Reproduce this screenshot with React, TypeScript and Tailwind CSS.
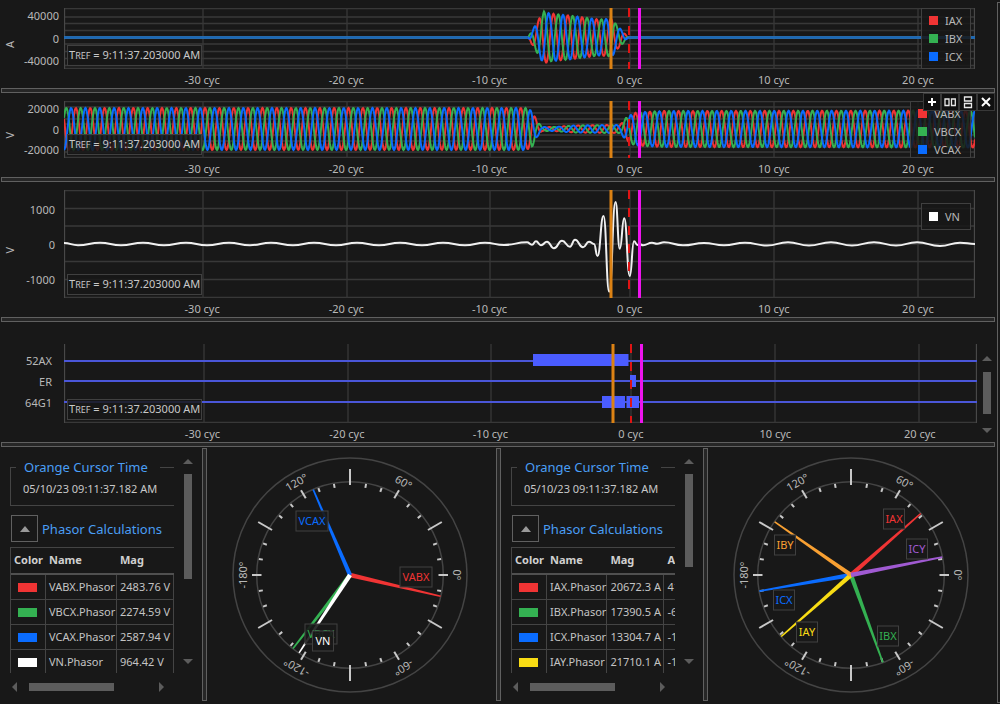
import type { ReactNode } from "react";
import clsx from "clsx";

const RED = "#f03434";
const GREEN = "#34b152";
const BLUE = "#0a6cff";
const BG = "#181818";

type Point = [number, number];

interface Series {
  label: string;
  color: string;
  swatch: string;
}

interface Phasor {
  name: string;
  color: string;
  angle: number;
  box: Point;
}

interface PhasorRow {
  name: string;
  swatch: string;
  mag: string;
  ang?: string;
}

const CYCLE = 14.35;
const TICKS = [139, 283, 426, 566, 710, 854];
const TICK_LABELS = ["-30 cyc", "-20 cyc", "-10 cyc", "0 cyc", "10 cyc", "20 cyc"];

/* ── waveform helpers ── */

/** Linear interpolation over an envelope given as [x, amplitude] */
function envelope(points: Point[], x: number) {
  for (let i = 1; i < points.length; i++) {
    const [x0, a0] = points[i - 1];
    const [x1, a1] = points[i];
    if (x <= x1) return a0 + ((a1 - a0) * (x - x0)) / (x1 - x0);
  }
  return points[points.length - 1][1];
}

function sinePath(env: Point[], peak: number, zero: number, width: number) {
  const out: string[] = [];
  for (let x = 0; x <= width; x += 0.5) {
    const y = zero - envelope(env, x) * Math.cos((2 * Math.PI * (x - peak)) / CYCLE);
    out.push(`${x} ${y.toFixed(2)}`);
  }
  return "M" + out.join("L");
}

/** Curve through turning points, flat at each one */
function turningPath(points: Point[]) {
  let d = `M${points[0][0]} ${points[0][1]}`;
  for (let i = 1; i < points.length; i++) {
    const [x0, y0] = points[i - 1];
    const [x1, y1] = points[i];
    const mx = ((x0 + x1) / 2).toFixed(2);
    d += `C${mx} ${y0} ${mx} ${y1} ${x1} ${y1}`;
  }
  return d;
}

const currentEnv: Point[] = [[0, 0], [464, 0], [470, 10], [477, 22], [480, 26], [486, 24], [505, 22], [535, 18], [548, 19], [553, 12], [558, 7], [564, 0], [911, 0]];
const voltageEnv: Point[] = [[0, 21], [462, 21], [468, 18], [473, 8], [478, 2], [490, 2], [510, 3.5], [545, 4], [556, 4], [562, 11], [570, 16], [580, 17], [600, 18], [911, 18.5]];

const neutral: Point[] = [
  [0, 53], [14, 55.2], [36, 52.7], [57, 55.2], [79, 52.7], [100, 55.2], [122, 52.7], [143, 55.2], [165, 52.7],
  [186, 55.2], [207, 52.7], [229, 55.2], [250, 52.7], [272, 55.2], [293, 52.7], [315, 55.2], [336, 52.7],
  [358, 55.2], [379, 52.7], [401, 55.2], [421, 52.7], [440, 55], [463, 52.3], [468, 54.7], [472, 51.3], [477, 55.3],
  [483, 51.7], [490, 58.3], [498, 50.7], [506, 56.7], [511, 49.7], [519, 57.3], [525, 51.7], [530, 54],
  [533.5, 66], [539.5, 26], [545.2, 101.7], [551.5, 12], [555.8, 58.7], [560.2, 28.3], [565.8, 86],
  [570, 51.3], [573.5, 55], [575.5, 54], [579, 55.3], [588, 52.7], [593, 53.7], [600, 52.3], [619, 55.3],
  [640, 53], [660, 55.3], [681, 52.7], [703, 55.5], [724, 52.3], [745, 55.5], [767, 52.3], [788, 55.5],
  [810, 52.3], [832, 55.5], [853, 52.3], [876, 56], [896, 52.7], [911, 54],
];

const currents: Series[] = [
  { label: "IAX", color: RED, swatch: "bg-[#f03434]" },
  { label: "IBX", color: GREEN, swatch: "bg-[#34b152]" },
  { label: "ICX", color: BLUE, swatch: "bg-[#0a6cff]" },
];
const voltages: Series[] = [
  { label: "VABX", color: RED, swatch: "bg-[#f03434]" },
  { label: "VBCX", color: GREEN, swatch: "bg-[#34b152]" },
  { label: "VCAX", color: BLUE, swatch: "bg-[#0a6cff]" },
];
const neutrals: Series[] = [{ label: "VN", color: "#ffffff", swatch: "bg-white" }];

/* ── shared bits ── */

function Splitter({ vertical = false }: { vertical?: boolean }) {
  return (
    <div
      role="separator"
      className={clsx("shrink-0 border border-[#606060] bg-[#262626]", vertical ? "w-[5px]" : "mx-px mr-0.5 h-[5px]")}
    />
  );
}

function ReferenceTime() {
  return (
    <div className="absolute bottom-[3px] left-[3px] border border-[#404040] bg-[#181818]/85 px-px leading-[18px] text-[#c8c8c8]">
      T<span className="text-[9px]">REF</span> = 9:11:37.203000 AM
    </div>
  );
}

function Legend({ series, className }: { series: Series[]; className: string }) {
  return (
    <ul className={clsx("absolute right-1 flex flex-col justify-center border border-[#404040] bg-[#181818]/85 pl-[7px]", className)}>
      {series.map((s) => (
        <li key={s.label} className="flex items-center gap-[7px] leading-[18px]">
          <span className={clsx("size-[9px]", s.swatch)} />
          {s.label}
        </li>
      ))}
    </ul>
  );
}

function Cursors({ height, shift = 0 }: { height: number; shift?: number }) {
  return (
    <g>
      <path d={`M${565 + shift} 0V${height}`} stroke="#e01414" strokeWidth="2" strokeDasharray="9 9" />
      <path d={`M${547 + shift} 0V${height}`} stroke="#dc8214" strokeWidth="3" />
      <path d={`M${575.5 + shift} 0V${height}`} stroke="#ee14ee" strokeWidth="3" />
    </g>
  );
}

function GridLines({ rows, height, width, shift = 0 }: { rows: number[]; height: number; width: number; shift?: number }) {
  return (
    <g stroke="#383838" strokeWidth="1.3">
      {rows.map((y) => <path key={y} d={`M0 ${y}H${width}`} />)}
      {TICKS.map((x) => <path key={x} d={`M${x + shift} 0V${height}`} />)}
      <path d={`M.5 0V${height}M${width - 0.5} 0V${height}`} stroke="#484848" />
    </g>
  );
}

interface ChartProps {
  unit?: string;
  yLabels: string[];
  yClass: string;
  columns?: string;
  side?: ReactNode;
  children: ReactNode;
}

function Chart({ unit, yLabels, yClass, columns = "grid-cols-[20px_44px_1fr_22px]", side, children }: ChartProps) {
  return (
    <div className={clsx("grid", columns)}>
      <div className="flex items-center justify-center pt-3">
        <span className="rotate-180 leading-3 [writing-mode:vertical-rl]">{unit}</span>
      </div>
      <div className={clsx("flex flex-col justify-between text-right leading-4", yClass)}>
        {yLabels.map((l) => <span key={l}>{l}</span>)}
      </div>
      <div className="relative">{children}</div>
      <div className="row-span-2">{side}</div>
      <div className="col-start-3 -mr-3 grid h-[19px] grid-cols-[66fr_144fr_144fr_142fr_138fr_150fr_138fr] text-center leading-[22px]">
        <span />
        {TICK_LABELS.map((l) => <span key={l}>{l}</span>)}
      </div>
    </div>
  );
}

function Triangle({ dir }: { dir: "up" | "down" | "left" | "right" }) {
  const d = { up: "M0 6L5 1L10 6Z", down: "M0 1L5 6L10 1Z", left: "M5 0V10L0 5Z", right: "M1 0V10L6 5Z" }[dir];
  const tall = dir === "left" || dir === "right";
  return (
    <svg width={tall ? 6 : 10} height={tall ? 10 : 7} className="fill-[#5c5c5c]">
      <path d={d} />
    </svg>
  );
}

/* ── toolbar over the hovered chart ── */

function ChartToolbar() {
  const btn = "flex h-[18px] w-[18px] items-center justify-center border border-[#383838] bg-[#101010]";
  return (
    <div className="absolute top-0 right-0.5 z-10 flex">
      <button aria-label="Add" className={btn}>
        <svg width="10" height="10" stroke="#fff" strokeWidth="2"><path d="M1 5H9M5 1V9" /></svg>
      </button>
      <button aria-label="Split vertically" className={btn}>
        <svg width="12" height="10" fill="none" stroke="#e8e8e8" strokeWidth="1.3"><path d="M1 2H5V8.500H1ZM7.500 2H11.300V8.500H7.500Z" /></svg>
      </button>
      <button aria-label="Split horizontally" className={btn}>
        <svg width="10" height="13" fill="none" stroke="#e8e8e8" strokeWidth="1.3"><path d="M1.500 1H8.500V5H1.500ZM1.500 7.500H8.500V11.500H1.500Z" /></svg>
      </button>
      <button aria-label="Close" className={btn}>
        <svg width="10" height="10" stroke="#fff" strokeWidth="2"><path d="M1 1L9 9M9 1L1 9" /></svg>
      </button>
    </div>
  );
}

/* ── digital channels ── */

function DigitalPlot() {
  return (
    <svg viewBox="0 0 913 79" preserveAspectRatio="none" className="block h-[79px] w-full">
      <GridLines rows={[78.5]} height={79} width={913} shift={1} />
      <path d="M0 17H913M0 37H913M0 58H913" stroke="#4a56d8" strokeWidth="2" />
      <path d="M469 10H564.500V22H469ZM566 31H572V43H566ZM538 52H561V64H538ZM562.500 52H575V64H562.500Z" fill="#4a5cff" />
      <Cursors height={79} shift={2} />
    </svg>
  );
}

/* ── phasor dial ── */

function Dial({ phasors }: { phasors: Phasor[] }) {
  const polar = (r: number, deg: number): Point => {
    const a = (deg * Math.PI) / 180;
    return [r * Math.cos(a), -r * Math.sin(a)];
  };
  const marks = Array.from({ length: 36 }, (_, i) => i * 10);
  const scale = [0, 60, 120, -180, -120, -60];

  return (
    <div className="flex min-w-60 flex-1 items-center justify-center pr-[3px]">
      <svg width="240" height="240" viewBox="-120 -120 240 240" fontSize="11" textAnchor="middle">
        <g fill="none" stroke="#444" strokeWidth="1.500">
          <circle r="117" />
          <circle r="93.300" />
        </g>
        {marks.map((deg) => {
          const long = deg % 30 === 0 && deg % 60 !== 0;
          const mid = deg % 60 === 0;
          const [x0, y0] = polar(long ? 90 : 88.5, deg);
          const [x1, y1] = polar(long ? 106 : mid ? 98 : 92.5, deg);
          return <path key={deg} d={`M${x0} ${y0}L${x1} ${y1}`} stroke="#c8c8c8" strokeWidth="2" />;
        })}
        {scale.map((deg) => {
          const [x, y] = polar(107, deg);
          return (
            <text key={deg} transform={`translate(${x} ${y}) rotate(${90 - deg})`} dy="4" fill="#b8b8b8">
              {deg}°
            </text>
          );
        })}
        {phasors.map((p) => (
          <path key={p.name} d="M0 -2.200L93 -.8V.8L0 2.200Z" transform={`rotate(${-p.angle})`} fill={p.color} />
        ))}
        {phasors.map((p) => {
          const w = p.name.length > 3 ? 32 : 21;
          return (
            <g key={p.name} transform={`translate(${p.box[0]} ${p.box[1]})`}>
              <rect x={-w / 2} y="-10" width={w} height="20" fill={BG} fillOpacity=".9" stroke="#404040" />
              <text dy="4" fill={p.color}>{p.name}</text>
            </g>
          );
        })}
      </svg>
    </div>
  );
}

/* ── phasor table panel ── */

interface PhasorPanelProps {
  rows: PhasorRow[];
  nameCol: string;
  magCol: string;
  thumb: string;
}

function PhasorPanel({ rows, nameCol, magCol, thumb }: PhasorPanelProps) {
  const hasAngle = rows.some((r) => r.ang);
  const cell = "border-r border-b border-[#444] pl-[3px]";
  return (
    <section className="grid w-[202px] shrink-0 grid-cols-[174px_28px] grid-rows-[225px_1fr]">
      <div className="overflow-hidden pl-2.5">
        <fieldset className="mt-[9px] h-[49px] w-60 border border-[#444]">
          <legend className="ml-[5px] pr-3 pl-2 text-[13px] leading-5 text-[#4a9ef5]">Orange Cursor Time</legend>
          <p className="pl-3 leading-6 text-[#c8c8c8]">05/10/23 09:11:37.182 AM</p>
        </fieldset>
        <div className="mt-[9px] flex items-center gap-1">
          <button aria-label="Collapse" className="ml-px flex size-[27px] shrink-0 items-center justify-center border border-[#606060]">
            <svg width="10" height="6" className="fill-[#999]"><path d="M0 6L5 0L10 6Z" /></svg>
          </button>
          <h2 className="text-[13px] leading-5 whitespace-nowrap text-[#4a9ef5]">Phasor Calculations</h2>
        </div>
        <div className="mt-[5px] w-60 border-t border-l border-[#444]">
          <table className="table-fixed border-separate border-spacing-0 whitespace-nowrap">
            <colgroup>
              <col className="w-[35px]" />
              <col className={nameCol} />
              <col className={magCol} />
              {hasAngle && <col className="w-[60px]" />}
            </colgroup>
            <thead>
              <tr className="h-[27px] text-left text-[#d0d0d0] [&>th]:border-b-2 [&>th]:border-[#505050] [&>th]:pl-[3px]">
                <th>Color</th>
                <th>Name</th>
                <th>Mag</th>
                {hasAngle && <th>Angle</th>}
              </tr>
            </thead>
            <tbody>
              {rows.map((r) => (
                <tr key={r.name} className="h-[25px] text-[#c4c4c4]">
                  <td className={cell}><div className={clsx("ml-1 h-[9px] w-[19px]", r.swatch)} /></td>
                  <td className={cell}>{r.name}</td>
                  <td className={cell}>{r.mag}</td>
                  {r.ang && <td className={cell}>{r.ang}</td>}
                </tr>
              ))}
            </tbody>
          </table>
        </div>
      </div>
      <div className="flex flex-col items-center pt-2.5 pb-2">
        <button aria-label="Scroll up"><Triangle dir="up" /></button>
        <div className={clsx("mt-[9px] w-2 bg-[#5c5c5c]", thumb)} />
        <button aria-label="Scroll down" className="mt-auto"><Triangle dir="down" /></button>
      </div>
      <div className="flex h-7 items-center pr-2.5 pl-3">
        <button aria-label="Scroll left"><Triangle dir="left" /></button>
        <div className="ml-[11px] h-2 w-[85px] bg-[#5c5c5c]" />
        <button aria-label="Scroll right" className="ml-auto"><Triangle dir="right" /></button>
      </div>
    </section>
  );
}

const voltageRows: PhasorRow[] = [
  { name: "VABX.Phasor", swatch: "bg-[#f03434]", mag: "2483.76 V" },
  { name: "VBCX.Phasor", swatch: "bg-[#34b152]", mag: "2274.59 V" },
  { name: "VCAX.Phasor", swatch: "bg-[#0a6cff]", mag: "2587.94 V" },
  { name: "VN.Phasor", swatch: "bg-white", mag: "964.42 V" },
];
const currentRows: PhasorRow[] = [
  { name: "IAX.Phasor", swatch: "bg-[#f03434]", mag: "20672.3 A", ang: "41.4°" },
  { name: "IBX.Phasor", swatch: "bg-[#34b152]", mag: "17390.5 A", ang: "-69.9°" },
  { name: "ICX.Phasor", swatch: "bg-[#0a6cff]", mag: "13304.7 A", ang: "-170.0°" },
  { name: "IAY.Phasor", swatch: "bg-[#f8dc14]", mag: "21710.1 A", ang: "-138.6°" },
];

const voltagePhasors: Phasor[] = [
  { name: "VABX", color: RED, angle: -13.2, box: [66, 2] },
  { name: "VBCX", color: GREEN, angle: -127.8, box: [-29, 59] },
  { name: "VCAX", color: BLUE, angle: 113.3, box: [-38, -54] },
  { name: "VN", color: "#ffffff", angle: -123.2, box: [-27, 66] },
];
const currentPhasors: Phasor[] = [
  { name: "IAX", color: RED, angle: 41.4, box: [43, -56] },
  { name: "IBX", color: GREEN, angle: -70, box: [37, 61] },
  { name: "ICX", color: BLUE, angle: -170, box: [-67, 25] },
  { name: "IAY", color: "#f8dc14", angle: -138.6, box: [-44, 57] },
  { name: "IBY", color: "#f8a032", angle: 145.1, box: [-66, -30] },
  { name: "ICY", color: "#a05ad2", angle: 11.1, box: [66, -26] },
];

export default function App() {
  return (
    <div className="flex min-h-screen bg-[#181818] font-['Noto_Sans','Segoe_UI',sans-serif] text-[11px] text-[#b8b8b8]">
      <main className="flex min-w-0 flex-1 flex-col">
        <section className="pt-2">
          <Chart unit="A" yLabels={["40000", "0", "-40000"]} yClass="pr-[5px]">
            <svg viewBox="0 0 911 61" preserveAspectRatio="none" className="block h-[61px] w-full">
              <GridLines rows={[0.5, 9, 15.5, 22.5, 36, 43.5, 50.5, 57.5, 60.5]} height={61} width={911} />
              <g fill="none" strokeWidth="2">
                <path d={sinePath(currentEnv, 489.5, 29.5, 911)} stroke={RED} />
                <path d={sinePath(currentEnv, 480, 29.5, 911)} stroke={GREEN} />
                <path d={sinePath(currentEnv, 484.7, 29.5, 911)} stroke={BLUE} />
              </g>
              <path d="M0 29.500H464M565 29.500H911" stroke="#1a68b8" strokeWidth="2" />
              <Cursors height={61} />
            </svg>
            <ReferenceTime />
            <Legend series={currents} className="inset-y-0 w-[50px]" />
          </Chart>
        </section>
        <Splitter />
        <section className="relative pt-2">
          <ChartToolbar />
          <Chart unit="V" yLabels={["20000", "0", "-20000"]} yClass="pr-[5px]">
            <svg viewBox="0 0 911 57" preserveAspectRatio="none" className="block h-[57px] w-full">
              <GridLines rows={[0.5, 6, 12, 18, 23, 34, 40, 46, 51, 56.5]} height={57} width={911} />
              <g fill="none" strokeWidth="2">
                <path d={sinePath(voltageEnv, 11.9, 28, 911)} stroke={RED} />
                <path d={sinePath(voltageEnv, 2.3, 28, 911)} stroke={GREEN} />
                <path d={sinePath(voltageEnv, 7.1, 28, 911)} stroke={BLUE} />
              </g>
              <Cursors height={57} />
            </svg>
            <ReferenceTime />
            <Legend series={voltages} className="inset-y-0 w-[61px] pt-1" />
          </Chart>
        </section>
        <Splitter />
        <section className="pt-2">
          <Chart unit="V" yLabels={["1000", "0", "-1000"]} yClass="pt-3 pr-[9px] pb-2.5">
            <svg viewBox="0 0 911 108" preserveAspectRatio="none" className="block h-[108px] w-full">
              <GridLines rows={[0.5, 18.5, 36, 54, 71.5, 89.5, 107.5]} height={108} width={911} />
              <path d={turningPath(neutral)} fill="none" stroke="#f0f0f0" strokeWidth="2" />
              <Cursors height={108} />
            </svg>
            <ReferenceTime />
            <Legend series={neutrals} className="top-[13px] h-[27px] w-[50px]" />
          </Chart>
        </section>
        <Splitter />
        <section className="pt-[22px]">
          <Chart
            yLabels={["52AX", "ER", "64G1"]}
            yClass="pt-[9px] pr-3 pb-3"
            columns="grid-cols-[20px_44px_1fr_20px]"
            side={
              <div className="flex h-[90px] flex-col items-center pt-[11px]">
                <button aria-label="Scroll up" className="leading-none"><Triangle dir="up" /></button>
                <div className="mt-2.5 h-[42px] w-2 bg-[#5c5c5c]" />
                <button aria-label="Scroll down" className="mt-auto leading-none"><Triangle dir="down" /></button>
              </div>
            }
          >
            <DigitalPlot />
            <ReferenceTime />
          </Chart>
        </section>
        <Splitter />
        <div className="mb-1 flex flex-1 pt-px">
          <PhasorPanel rows={voltageRows} nameCol="w-[71px]" magCol="w-[57px]" thumb="h-[105px]" />
          <Splitter vertical />
          <Dial phasors={voltagePhasors} />
          <Splitter vertical />
          <PhasorPanel rows={currentRows} nameCol="w-[59px]" magCol="w-[57px]" thumb="h-[93px]" />
          <Splitter vertical />
          <Dial phasors={currentPhasors} />
        </div>
        <div className="mb-px h-px bg-[#383838]" />
      </main>
      <div role="separator" className="mt-0.5 mb-1 w-[3px] border-y border-l border-[#606060]" />
    </div>
  );
}
